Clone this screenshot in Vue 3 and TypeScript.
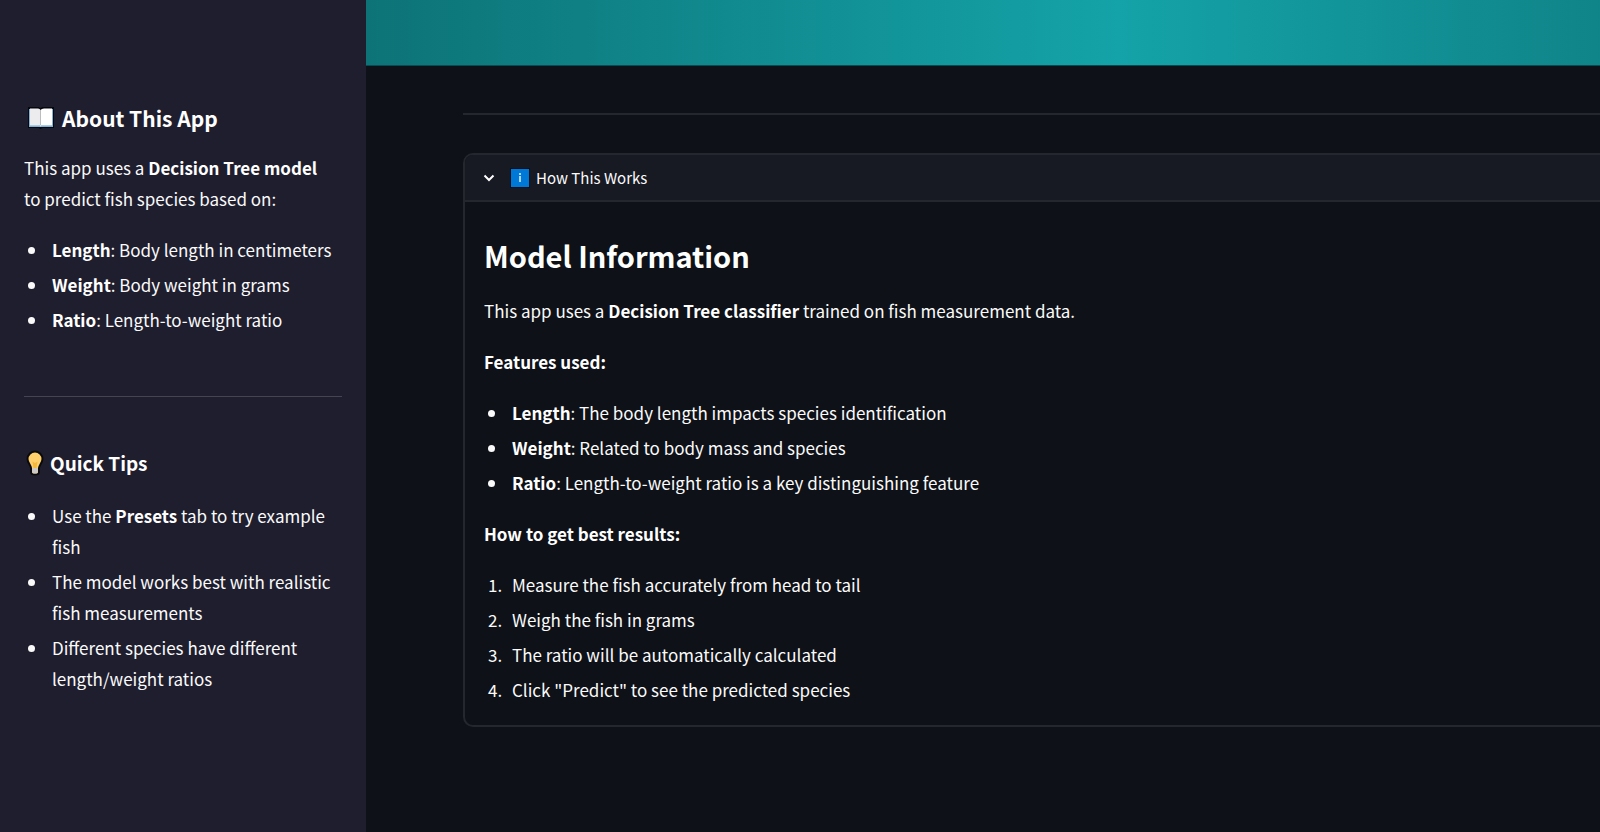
<script setup lang="ts">
interface Term {
  name: string
  text: string
}

const inputs: Term[] = [
  { name: 'Length', text: 'Body length in centimeters' },
  { name: 'Weight', text: 'Body weight in grams' },
  { name: 'Ratio', text: 'Length-to-weight ratio' },
]

const features: Term[] = [
  { name: 'Length', text: 'The body length impacts species identification' },
  { name: 'Weight', text: 'Related to body mass and species' },
  { name: 'Ratio', text: 'Length-to-weight ratio is a key distinguishing feature' },
]

const steps: string[] = [
  'Measure the fish accurately from head to tail',
  'Weigh the fish in grams',
  'The ratio will be automatically calculated',
  'Click "Predict" to see the predicted species',
]
</script>

<template>
  <div class="app">
    <aside class="sidebar">
      <section>
        <h2 class="about">
          <svg class="book" viewBox="0 0 28 24" aria-hidden="true">
            <path d="M1 1h10.500l2 1 2-1H27v21H15.500l-2 1-2-1H1z" fill="#05070c" />
            <path d="M2 3h2v16h9.500v2H2zM25 3h1v18H13.500v-2H25z" fill="#7fb2d6" />
            <path d="M3 2.500h8q2 0 2.500 1.500v16q-1-1-3-1H3z" fill="#ececee" />
            <path d="M25 2.500h-8q-2.500 0-3.500 1.500v16q1-1 3-1H25z" fill="#fff" />
            <path d="M3 19.500h8q2 0 2.500 1 .5-1 2.500-1h9" fill="none" stroke="#a9cde5" />
          </svg>
          About This App
        </h2>
        <p>This app uses a <strong>Decision Tree model</strong> to predict fish species based on:</p>
        <ul>
          <li v-for="item in inputs" :key="item.name">
            <strong>{{ item.name }}</strong>: {{ item.text }}
          </li>
        </ul>
      </section>
      <hr />
      <section>
        <h3 class="tips">
          <svg class="bulb" viewBox="0 0 18 26" aria-hidden="true">
            <path
              d="M9 1.500a7.500 7.500 0 0 0-7.500 7.500c0 4 3.500 6 3.500 9v4q0 2.500 4 2.500t4-2.500v-4c0-3 3.500-5 3.500-9A7.500 7.500 0 0 0 9 1.500z"
              fill="#ffcf6b"
              stroke="#0a0a0e"
              stroke-width="2"
            />
            <path d="M6.500 11.500 9 13l2.500-1.500L10.500 18h-3z" fill="#f5b83d" />
            <path d="M6.200 18h5.600v4q0 1.500-2.800 1.500T6.200 22z" fill="#c9c9cf" />
          </svg>
          Quick Tips
        </h3>
        <ul>
          <li>Use the <strong>Presets</strong> tab to try example fish</li>
          <li>The model works best with realistic fish measurements</li>
          <li>Different species have different length/weight ratios</li>
        </ul>
      </section>
    </aside>

    <main class="main">
      <div class="banner"></div>
      <div class="content">
        <hr />
        <details class="expander" open>
          <summary>
            <svg class="chevron" viewBox="0 0 12 12" aria-hidden="true">
              <path d="M1.500 3.500 6 8l4.500-4.500" fill="none" stroke="#fff" stroke-width="2" />
            </svg>
            <svg class="info" viewBox="0 0 20 20" aria-hidden="true">
              <rect width="20" height="20" fill="#06121f" />
              <rect x="1" y="1" width="18" height="18" fill="#0078d7" />
              <rect x="9" y="5" width="2" height="2" fill="#a8d4f7" />
              <rect x="9" y="8" width="2" height="6" fill="#a8d4f7" />
            </svg>
            <span>How This Works</span>
          </summary>
          <div class="body">
            <h1>Model Information</h1>
            <p>
              This app uses a <strong>Decision Tree classifier</strong> trained on fish measurement
              data.
            </p>
            <p><strong>Features used:</strong></p>
            <ul>
              <li v-for="item in features" :key="item.name">
                <strong>{{ item.name }}</strong>: {{ item.text }}
              </li>
            </ul>
            <p><strong>How to get best results:</strong></p>
            <ol>
              <li v-for="step in steps" :key="step">{{ step }}</li>
            </ol>
          </div>
        </details>
      </div>
    </main>
  </div>
</template>

<style>
body {
  margin: 0;
  background: #0e1117;
}
</style>

<style scoped>
.app {
  display: grid;
  grid-template-columns: 366px minmax(0, 1fr);
  min-height: 100vh;
  color: #fafafa;
  font: 17px/31px 'Noto Sans CJK SC', 'Source Sans Pro', sans-serif;
}

.sidebar {
  box-sizing: border-box;
  padding: 99px 24px 0;
  background: #1f1e2e;
}

h1,
h2,
h3 {
  margin: 0;
  color: #fff;
  font-weight: 600;
}

h1 {
  font-size: 29px;
  line-height: 40px;
  margin-bottom: 20px;
}

h2,
h3 {
  display: flex;
  align-items: center;
  line-height: 38px;
}

h2 {
  gap: 7px;
  margin-bottom: 15px;
  font-size: 21px;
}

h3 {
  gap: 6px;
  margin-bottom: 18px;
  font-size: 19px;
}

p {
  margin: 0 0 20px;
}

.sidebar p {
  padding-right: 12px;
}

strong {
  color: #fff;
  font-weight: 600;
}

ul,
ol {
  margin: 0 0 20px;
  padding-left: 22px;
}

li {
  margin-bottom: 4px;
  padding-left: 6px;
}

ul {
  padding-left: 24px;
}

ul li {
  padding-left: 4px;
}

hr {
  height: 1px;
  margin: 0;
  border: 0;
  background: #454552;
}

.sidebar hr {
  margin: 61px 0 47px;
}

.book {
  width: 28px;
  height: 24px;
  margin-left: 3px;
}

.bulb {
  width: 18px;
  height: 26px;
  margin-left: 2px;
}

.banner {
  height: 65px;
  border-bottom: 1px solid #0b4a50;
  background: linear-gradient(90deg, #0d7377 0%, #14a3a8 61%, #0d7377 122%);
}

.content {
  padding: 47px 0 0 97px;
}

.content hr {
  height: 2px;
  background: #25272f;
}

.expander {
  margin-top: 38px;
  border: 2px solid #25272f;
  border-right: 0;
  border-radius: 10px 0 0 10px;
  overflow: hidden;
}

summary {
  display: flex;
  align-items: center;
  height: 45px;
  padding-left: 18px;
  background: #171923;
  font-size: 15px;
  cursor: pointer;
  list-style: none;
}

.chevron {
  width: 12px;
  height: 12px;
  margin-right: 15px;
}

.info {
  width: 20px;
  height: 20px;
  margin-right: 6px;
}

.body {
  padding: 33px 19px 0;
  border-top: 2px solid #25272f;
}
</style>
